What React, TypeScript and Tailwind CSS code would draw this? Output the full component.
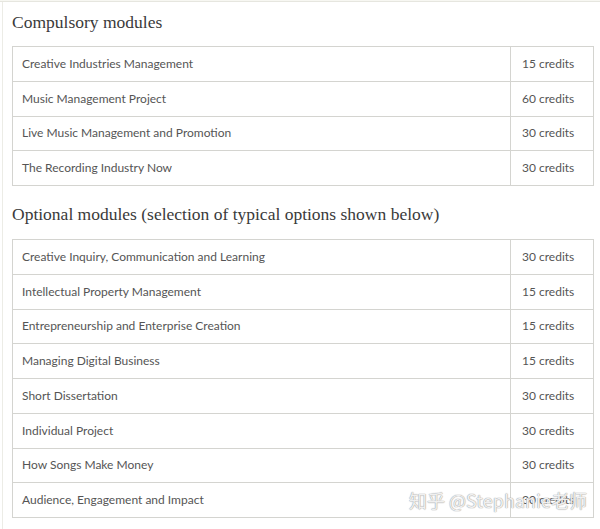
const compulsory = [
  ["Creative Industries Management", "15 credits"],
  ["Music Management Project", "60 credits"],
  ["Live Music Management and Promotion", "30 credits"],
  ["The Recording Industry Now", "30 credits"],
];

const optional = [
  ["Creative Inquiry, Communication and Learning", "30 credits"],
  ["Intellectual Property Management", "15 credits"],
  ["Entrepreneurship and Enterprise Creation", "15 credits"],
  ["Managing Digital Business", "15 credits"],
  ["Short Dissertation", "30 credits"],
  ["Individual Project", "30 credits"],
  ["How Songs Make Money", "30 credits"],
  ["Audience, Engagement and Impact", "30 credits"],
];

function ModuleTable({ rows }: { rows: string[][] }) {
  return (
    <div className="ml-[12px] w-[582px] border-x border-t border-[#d4d4d0]">
      {rows.map(([name, credits]) => (
        <div
          key={name}
          className="flex h-[34.75px] items-center border-b border-[#d4d4d0] text-[12px] text-[#555]"
        >
          <div className="flex-1 pl-[9px]">{name}</div>
          <div className="flex h-full w-[83px] items-center border-l border-[#d4d4d0] pl-[11px]">{credits}</div>
        </div>
      ))}
    </div>
  );
}

export default function App() {
  return (
    <div className="relative h-[529px] w-[600px] overflow-hidden bg-white font-['Lato','Open_Sans',sans-serif]">
      <div className="h-[2px] border-b border-[#e6e6df] bg-[#f7f7f2]" />
      <div className="absolute left-[2px] top-[2px] bottom-0 w-px bg-[#ececE6]" />
      <h2 className="ml-[12px] mt-[10px] h-[34px] font-['Liberation_Serif',serif] text-[17.5px] leading-[20px] text-[#3a3a3a]">
        Compulsory modules
      </h2>
      <ModuleTable rows={compulsory} />
      <h2 className="ml-[12px] mt-[18px] h-[35px] font-['Liberation_Serif',serif] text-[17.5px] leading-[20px] text-[#3a3a3a]">
        Optional modules (selection of typical options shown below)
      </h2>
      <ModuleTable rows={optional} />
      <div className="absolute left-[409px] top-[488px] whitespace-nowrap font-['Noto_Sans_CJK_SC','Liberation_Sans',sans-serif] text-[18px] leading-[24px] text-white/85 [text-shadow:0_0_1px_#999,0_0_1px_#999]">
        知乎 @Stephanie老师
      </div>
    </div>
  );
}
